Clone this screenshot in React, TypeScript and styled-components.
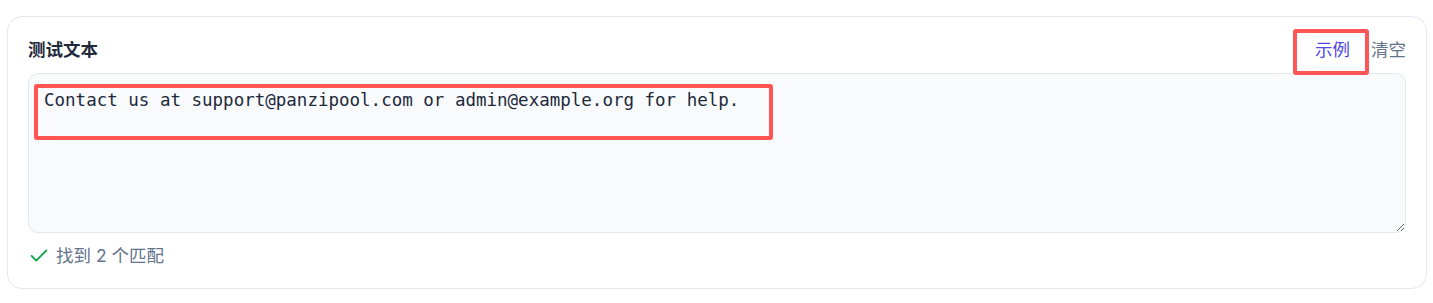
import React from "react";
import styled, { createGlobalStyle } from "styled-components";

const GlobalStyle = createGlobalStyle`
  html, body { margin: 0; padding: 0; background: #ffffff; }
  body { font-family: Inter, "Noto Sans CJK SC", sans-serif; }
`;

const Page = styled.div`
  padding: 16px 6px 13px 7px;
`;

const Card = styled.section`
  position: relative;
  border: 1px solid #e2e8f0;
  border-radius: 15px;
  background: #ffffff;
  padding: 20px;
`;

const Header = styled.div`
  display: flex;
  align-items: center;
  justify-content: space-between;
  height: 25px;
  margin-bottom: 11px;
`;

const Title = styled.h3`
  margin: 0;
  font-size: 17.5px;
  line-height: 25px;
  font-weight: 600;
  color: #1e293b;
`;

const Actions = styled.div`
  display: flex;
  align-items: center;
  gap: 21px;
`;

const LinkButton = styled.button<{ $primary?: boolean }>`
  border: 0;
  background: none;
  padding: 0;
  font-family: Inter, "Noto Sans CJK SC", sans-serif;
  font-size: 17.5px;
  line-height: 25px;
  color: ${(p) => (p.$primary ? "#5046e5" : "#64748b")};
  cursor: pointer;
`;

const TextArea = styled.textarea`
  display: block;
  box-sizing: border-box;
  width: 100%;
  height: 160px;
  margin: 0;
  padding: 12px 15px;
  border: 1px solid #e2e8f0;
  border-radius: 10px;
  background: #f8fafc;
  color: #1e293b;
  font-family: "DejaVu Sans Mono", monospace;
  font-size: 17.5px;
  line-height: 28px;
  resize: vertical;
  outline: none;
`;

const Status = styled.div`
  display: flex;
  align-items: center;
  gap: 6px;
  margin-top: 10px;
  font-size: 17.5px;
  line-height: 25px;
  color: #64748b;
`;

const Highlight = styled.div<{ $l: number; $t: number; $w: number; $h: number }>`
  position: absolute;
  left: ${(p) => p.$l}px;
  top: ${(p) => p.$t}px;
  width: ${(p) => p.$w}px;
  height: ${(p) => p.$h}px;
  box-sizing: border-box;
  border: 4px solid #ff5555;
  border-radius: 3px;
  pointer-events: none;
`;

const CheckIcon = () => (
  <svg width="22" height="22" viewBox="0 0 24 24" fill="none" stroke="#16a34a" strokeWidth="2" strokeLinecap="round" strokeLinejoin="round">
    <path d="M20 6 9 17l-5-5" />
  </svg>
);

export default function App() {
  return (
    <>
      <GlobalStyle />
      <Page>
        <Card>
          <Header>
            <Title>测试文本</Title>
            <Actions>
              <LinkButton $primary>示例</LinkButton>
              <LinkButton>清空</LinkButton>
            </Actions>
          </Header>
          <TextArea
            spellCheck={false}
            defaultValue="Contact us at support@panzipool.com or admin@example.org for help."
          />
          <Status>
            <CheckIcon />
            <span>找到 2 个匹配</span>
          </Status>
          <Highlight $l={26} $t={67} $w={739} $h={56} />
          <Highlight $l={1285} $t={12} $w={76} $h={46} />
        </Card>
      </Page>
    </>
  );
}
